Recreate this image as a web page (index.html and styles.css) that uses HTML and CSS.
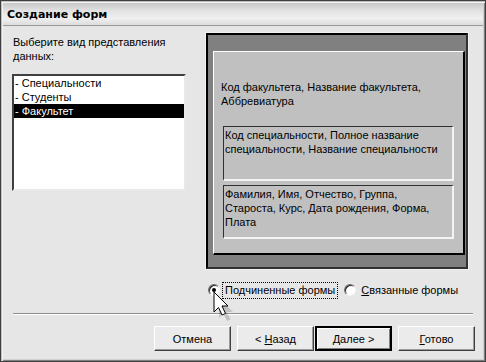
FILE: index.html
```html
<!DOCTYPE html>
<html lang="ru">
<head>
    <meta charset="UTF-8">
    <title>Создание форм</title>
    <link rel="stylesheet" href="styles.css">
</head>
<body>
    <div class="window">
        <div class="titlebar">Создание форм</div>

        <div class="dialog">
            <div class="main">
                <div class="left">
                    <p class="prompt">Выберите вид представления данных:</p>
                    <ul class="listbox">
                        <li>- Специальности</li>
                        <li>- Студенты</li>
                        <li class="selected">- Факультет</li>
                    </ul>
                </div>

                <div class="preview">
                    <div class="preview-form">
                        <p class="form-fields">Код факультета, Название факультета, Аббревиатура</p>
                        <div class="subform">Код специальности, Полное название специальности, Название специальности</div>
                        <div class="subform">Фамилия, Имя, Отчество, Группа, Староста, Курс, Дата рождения, Форма, Плата</div>
                    </div>
                </div>
            </div>

            <div class="options">
                <label class="option">
                    <span class="radio checked"></span>
                    <span class="option-text focused">По<u>д</u>чиненные формы</span>
                </label>
                <label class="option">
                    <span class="radio"></span>
                    <span class="option-text"><u>С</u>вязанные формы</span>
                </label>
            </div>

            <div class="separator"></div>

            <div class="buttons">
                <button class="btn">Отмена</button>
                <div class="btn-pair">
                    <button class="btn">&lt; <u>Н</u>азад</button>
                    <button class="btn default"><u>Д</u>алее &gt;</button>
                </div>
                <button class="btn"><u>Г</u>отово</button>
            </div>
        </div>

        <!-- mouse pointer over the first radio -->
        <svg class="cursor" width="22" height="32" viewBox="0 0 22 32">
            <path d="M4 4 L4 24 L8.5 19.5 L12 27 L15.5 25.5 L12 18 L18 18 Z" fill="#000" opacity="0.16" transform="translate(2 3)"/>
            <path d="M1 1 L1 21 L5.5 16.5 L9 24 L12.5 22.5 L9 15 L15 15 Z" fill="#fff" stroke="#000" stroke-width="1" stroke-linejoin="round"/>
        </svg>
    </div>
</body>
</html>
```

FILE: styles.css
```css
* {
    box-sizing: border-box;
}
body {
    margin: 0;
    font-family: "Liberation Sans", Arial, sans-serif;
    font-size: 11px;
    color: #000;
    background: #fff;
}
.window {
    position: relative;
    width: 486px;
    height: 362px;
    background: #e6e6e6;
    border: 1px solid #404040;
    box-shadow: inset 1px 1px 0 #bdbdbd, inset 2px 2px 0 #f4f4f4, inset -1px -1px 0 #808080, inset -2px -2px 0 #d0d0d0;
    display: flex;
    flex-direction: column;
    overflow: hidden;
}
.titlebar {
    height: 23px;
    margin: 2px 2px 0 2px;
    padding: 4px 0 0 4px;
    font-family: "DejaVu Sans", sans-serif;
    font-weight: bold;
    font-size: 11px;
    line-height: 15px;
    background: linear-gradient(#c8c8c8, #e2e2e2 35%, #f0f0f0 70%, #dcdcdc);
    border-bottom: 1px solid #9a9a9a;
}
.dialog {
    flex: 1;
    padding: 7px 10px 0 11px;
    display: flex;
    flex-direction: column;
}
.main {
    display: flex;
}
.left {
    width: 174px;
}
.prompt {
    margin: 2px 0 0 1px;
    width: 160px;
    line-height: 14px;
}
.listbox {
    list-style: none;
    margin: 11px 0 0 0;
    padding: 0;
    height: 117px;
    background: #fff;
    border: 2px solid;
    border-color: #404040 #e8e8e8 #e8e8e8 #404040;
    line-height: 14px;
}
.listbox li {
    padding-left: 1px;
}
.listbox .selected {
    background: #000;
    color: #fff;
}
.preview {
    margin-left: 20px;
    width: 262px;
    height: 236px;
    background: #808080;
    border: 2px solid;
    border-color: #000 #303030 #303030 #000;
    box-shadow: 0 0 0 1px #f2f2f2;
    padding: 16px 1px 12px 5px;
}
.preview-form {
    height: 204px;
    background: #c0c0c0;
    border: 1px solid;
    border-color: #fff #000 #000 #fff;
    border-right-width: 2px;
    border-bottom-width: 2px;
    padding: 28px 9px 0 7px;
}
.form-fields {
    margin: 0 0 18px 0;
    line-height: 14px;
}
.subform {
    height: 55px;
    margin: 0 0 4px 2px;
    border: 2px solid;
    border-color: #303030 #f4f4f4 #f4f4f4 #303030;
    border-top-width: 1px;
    border-left-width: 1px;
    padding: 1px 8px 0 1px;
    line-height: 14px;
}
.subform + .subform {
    height: 54px;
}
.options {
    display: flex;
    align-items: center;
    margin: 13px 0 0 196px;
    height: 16px;
}
.option {
    display: flex;
    align-items: center;
}
.radio {
    width: 12px;
    height: 12px;
    border-radius: 50%;
    background: #fff;
    border: 1px solid;
    border-color: #707070 #f4f4f4 #f4f4f4 #707070;
    box-shadow: inset 1px 1px 0 #202020;
    display: flex;
    align-items: center;
    justify-content: center;
}
.radio.checked::after {
    content: "";
    width: 4px;
    height: 4px;
    border-radius: 50%;
    background: #000;
}
.option-text {
    margin-left: 2px;
    padding: 1px 2px;
    border: 1px solid transparent;
    line-height: 13px;
}
.option-text.focused {
    border: 1px dotted #000;
    margin-right: 6px;
}
.separator {
    margin: 15px 0 0 1px;
    width: 460px;
    border-top: 1px solid #909090;
    border-bottom: 1px solid #fff;
}
.buttons {
    display: flex;
    justify-content: flex-end;
    gap: 6px;
    margin-top: 11px;
    padding-right: 0;
}
.btn-pair {
    display: flex;
    gap: 1px;
}
.btn {
    width: 77px;
    height: 25px;
    font-family: inherit;
    font-size: 11px;
    color: #000;
    background: #ebebeb;
    border: 1px solid;
    border-color: #fff #404040 #404040 #fff;
    box-shadow: inset -1px -1px 0 #9a9a9a;
    padding: 0;
}
.btn.default {
    border: 2px solid #000;
    box-shadow: inset 1px 1px 0 #fff, inset -1px -1px 0 #808080;
}
.cursor {
    position: absolute;
    left: 212px;
    top: 290px;
}
```
